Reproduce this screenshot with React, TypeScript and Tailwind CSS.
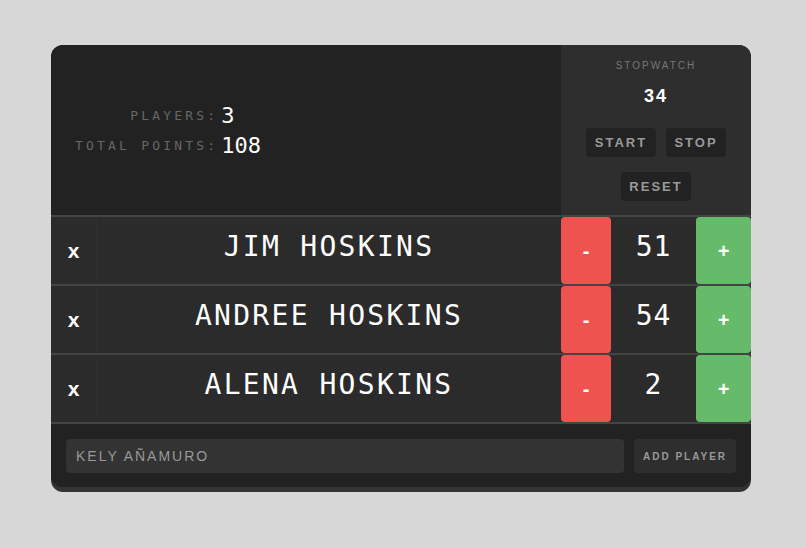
import React from "react";

const players = [
  { name: "Jim Hoskins", score: 51 },
  { name: "Andree Hoskins", score: 54 },
  { name: "Alena Hoskins", score: 2 },
];

const mono = "font-['DejaVu_Sans_Mono',monospace]";
const sans = "font-['Liberation_Sans',Arial,sans-serif]";

const Stats = () => (
  <table className={`${mono} ml-[24px] mt-[53px] border-separate border-spacing-y-[6px]`}>
    <tbody>
      <tr>
        <td className="text-right text-[13px] tracking-[3.2px] text-[#666] pr-[3px]">PLAYERS:</td>
        <td className="text-[22px] text-white leading-[24px]">3</td>
      </tr>
      <tr>
        <td className="text-right text-[13px] tracking-[3.2px] text-[#666] pr-[3px]">TOTAL POINTS:</td>
        <td className="text-[22px] text-white leading-[24px]">108</td>
      </tr>
    </tbody>
  </table>
);

const Btn = ({ children, w }: { children: React.ReactNode; w: string }) => (
  <button
    className={`${sans} ${w} h-[29px] rounded-[4px] bg-[#222] text-[13px] font-bold tracking-[2px] text-[#999]`}
  >
    {children}
  </button>
);

const Stopwatch = () => (
  <div className={`${sans} w-[190px] bg-[#2e2e2e] flex flex-col items-center pt-[15px]`}>
    <div className="text-[10px] tracking-[2px] text-[#777] leading-[12px]">STOPWATCH</div>
    <div className="text-[18px] font-bold tracking-[2px] text-white mt-[13px] leading-[22px]">34</div>
    <div className="flex gap-[10px] mt-[21px]">
      <Btn w="w-[70px]">START</Btn>
      <Btn w="w-[60px]">STOP</Btn>
    </div>
    <div className="mt-[15px]">
      <Btn w="w-[70px]">RESET</Btn>
    </div>
  </div>
);

const Row = ({ name, score }: { name: string; score: number }) => (
  <div className="flex h-[69px] border-t-2 border-[#444] bg-[#2b2b2b]">
    <div className={`${sans} w-[46px] flex items-center justify-center text-[21px] font-bold text-white border-r border-[#2e2e2e]`}>
      x
    </div>
    <div className={`${mono} flex-1 flex items-center justify-center pb-[7px] text-[28px] tracking-[2.3px] text-white uppercase`}>
      {name}
    </div>
    <div className="w-[190px] flex">
      <button className={`${sans} w-[50px] h-full rounded-[4px] bg-[#ef5350] text-white text-[20px] font-bold`}>-</button>
      <div className={`${mono} flex-1 flex items-center justify-center pb-[7px] text-[28px] tracking-[1px] text-white`}>
        {score}
      </div>
      <button className={`${sans} w-[55px] h-full rounded-[4px] bg-[#66bb6a] text-white text-[20px] font-bold`}>+</button>
    </div>
  </div>
);

export default function App() {
  return (
    <div className="min-h-[548px] bg-[#d7d7d7] pt-[45px] pl-[51px]">
      <div className="w-[700px] rounded-[12px] overflow-hidden bg-[#222] shadow-[0_5px_0_#333]">
        <div className="flex h-[170px]">
          <div className="flex-1 bg-[#222]">
            <Stats />
          </div>
          <Stopwatch />
        </div>
        {players.map((p) => (
          <Row key={p.name} name={p.name} score={p.score} />
        ))}
        <div className="flex gap-[10px] border-t-2 border-[#444] px-[15px] pt-[15px] pb-[14px] bg-[#222]">
          <div
            className={`${sans} flex-1 h-[34px] rounded-[4px] bg-[#333] flex items-center pl-[10px] text-[14px] tracking-[2px] text-[#999]`}
          >
            KELY AÑAMURO
          </div>
          <button
            className={`${sans} w-[102px] h-[34px] rounded-[4px] bg-[#2e2e2e] text-[10px] font-bold tracking-[2px] text-[#999]`}
          >
            ADD PLAYER
          </button>
        </div>
      </div>
    </div>
  );
}
